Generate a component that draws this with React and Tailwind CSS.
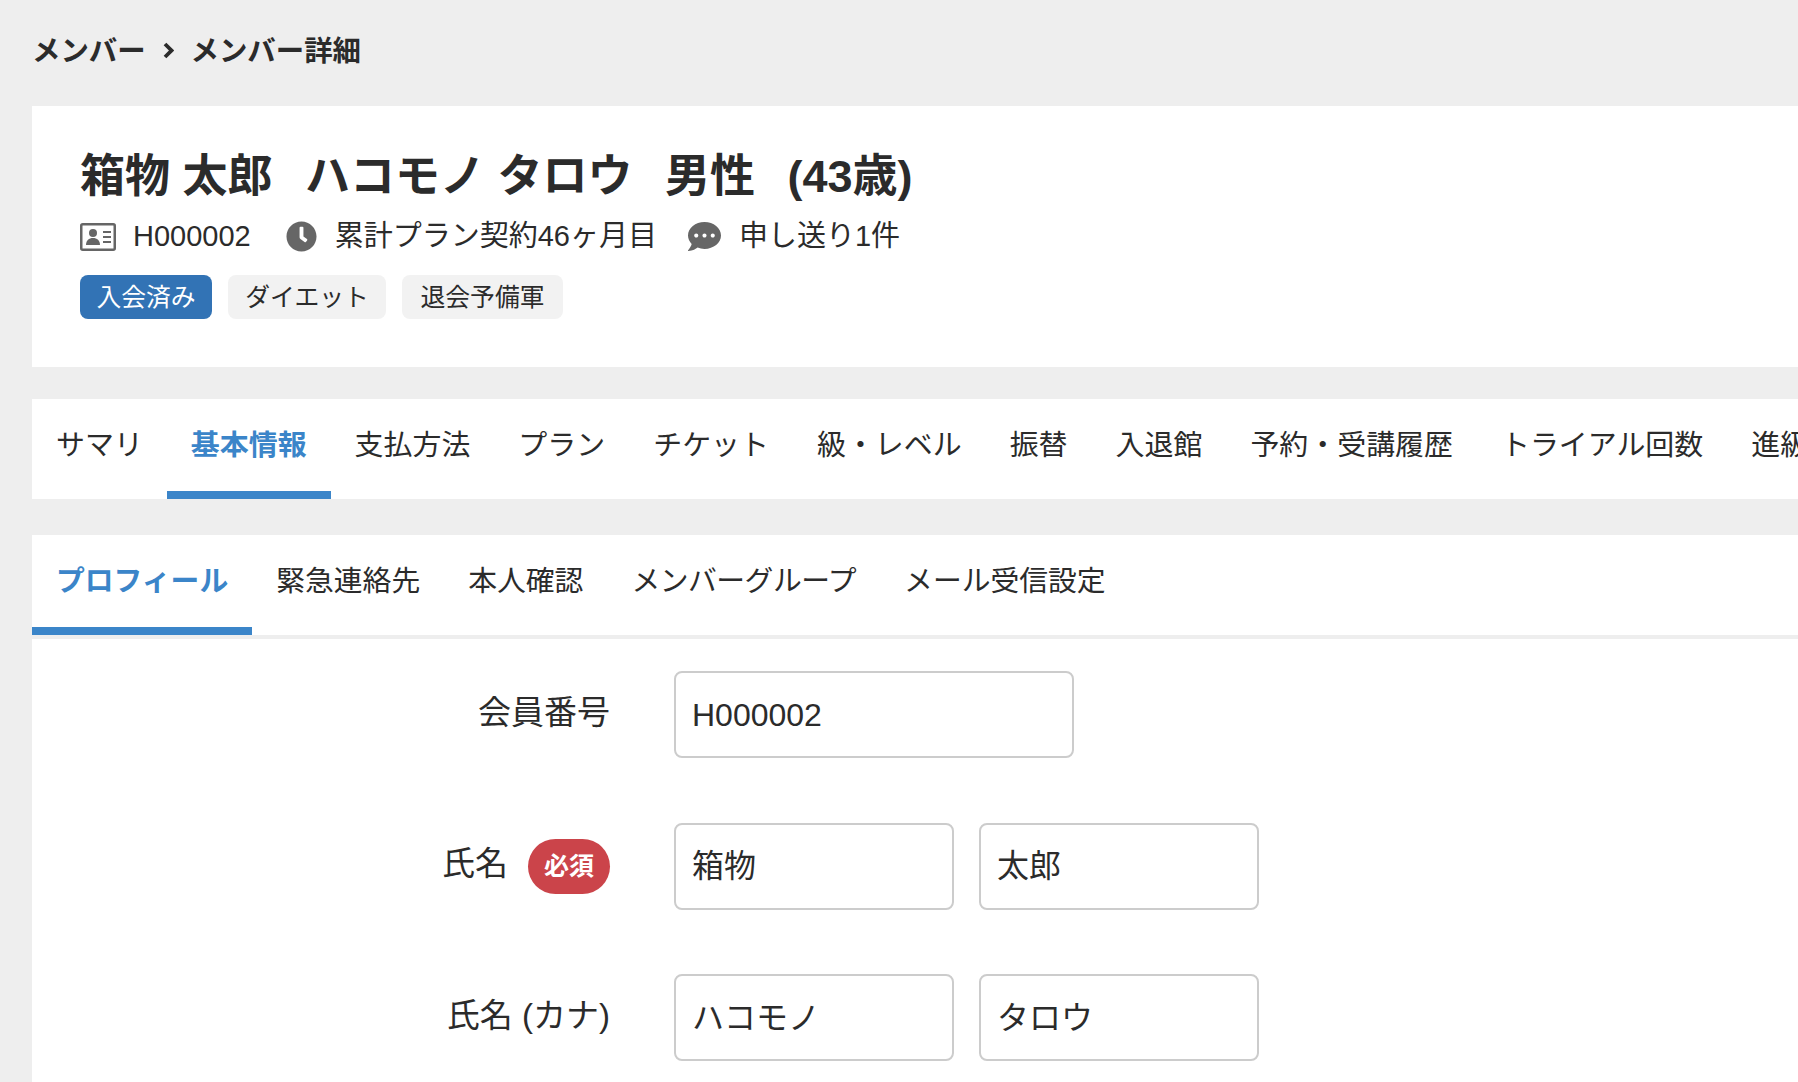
import { FaClock, FaCommentDots } from "react-icons/fa";

const mainTabs = ["サマリ", "基本情報", "支払方法", "プラン", "チケット", "級・レベル", "振替", "入退館", "予約・受講履歴", "トライアル回数", "進級履歴"];
const subTabs = ["プロフィール", "緊急連絡先", "本人確認", "メンバーグループ", "メール受信設定"];

function IdCardIcon() {
  return (
    <svg viewBox="0 0 36 28" className="w-[36px] h-[28px] mt-[2px] text-[#666]">
      <rect x="1.250" y="1.250" width="33.500" height="25.500" rx="1.500" fill="none" stroke="currentColor" strokeWidth="2.500" />
      <circle cx="13" cy="10" r="4" fill="currentColor" />
      <path d="M6 22c0-4.500 3-7 7-7s7 2.500 7 7z" fill="currentColor" />
      <path d="M23 9h8M23 14h8M23 19h8" stroke="currentColor" strokeWidth="1.800" />
    </svg>
  );
}

function Field({ label, required, values, wide }) {
  return (
    <div className="flex items-center">
      <div className="w-[578px] shrink-0 flex items-center justify-end gap-5 text-[33px] leading-[48px]">
        <span className="pb-[4px]">{label}</span>
        {required && (
          <span className="w-[82px] h-[55px] rounded-full bg-[#cb444a] text-white text-[25px] font-bold flex items-center justify-center">
            必須
          </span>
        )}
      </div>
      <div className="ml-[64px] flex gap-[25px]">
        {values.map((v) => (
          <div
            key={v}
            className={`${wide ? "w-[400px]" : "w-[280px]"} h-[87px] border-2 border-[#ccc] rounded-lg px-4 flex items-center text-[32px] bg-white`}
          >
            {v}
          </div>
        ))}
      </div>
    </div>
  );
}

export default function App() {
  return (
    <div
      className="w-[1798px] h-[1082px] overflow-hidden bg-[#eee] text-[#2b2b2b] pl-8"
      style={{ fontFamily: '"Liberation Sans", "Noto Sans CJK JP", sans-serif' }}
    >
      {/* breadcrumb */}
      <div className="h-[106px] pt-[28px] flex items-start gap-[17px] text-[28.4px] leading-[46px] font-bold">
        <span>メンバー</span>
        <svg viewBox="0 0 11 17" className="w-[11px] h-[17px] mt-[14px]">
          <polyline points="2,2 8.500,8.500 2,15" fill="none" stroke="currentColor" strokeWidth="3.800" />
        </svg>
        <span>メンバー詳細</span>
      </div>

      {/* member header */}
      <div className="w-[1900px] h-[261px] bg-white pl-12 pt-[41px]">
        <h1 className="flex gap-[32.5px] text-[45px] leading-[60px] font-bold whitespace-nowrap">
          <span>箱物 太郎</span>
          <span>ハコモノ タロウ</span>
          <span>男性</span>
          <span>(43歳)</span>
        </h1>
        <div className="mt-[7px] flex items-center text-[29px] leading-[44px] h-[44px]">
          <IdCardIcon />
          <span className="ml-[17px]">H000002</span>
          <FaClock className="ml-[35px] w-[31px] h-[31px] text-[#666]" />
          <span className="ml-[18px]">累計プラン契約46ヶ月目</span>
          <FaCommentDots className="ml-[31px] w-[33px] h-[33px] text-[#666]" />
          <span className="ml-[18px]">申し送り1件</span>
        </div>
        <div className="mt-[17px] flex gap-4 text-[24.8px]">
          <span className="w-[132px] h-[44px] pt-[2px] rounded-lg bg-[#3273b5] text-white flex items-center justify-center">入会済み</span>
          <span className="w-[158px] h-[44px] pt-[2px] rounded-lg bg-[#f2f2f2] flex items-center justify-center">ダイエット</span>
          <span className="w-[161px] h-[44px] pt-[2px] rounded-lg bg-[#f2f2f2] flex items-center justify-center">退会予備軍</span>
        </div>
      </div>

      {/* main tabs */}
      <div className="mt-8 w-[1900px] h-[100px] bg-white flex text-[28.95px]">
        {mainTabs.map((t) => (
          <div
            key={t}
            className={
              t === "基本情報"
                ? "px-[24px] h-full pt-[25px] border-b-8 border-[#3b85c9] text-[#3b85c9] font-bold whitespace-nowrap"
                : "px-[24px] h-full pt-[25px] whitespace-nowrap"
            }
          >
            {t}
          </div>
        ))}
      </div>

      {/* profile card */}
      <div className="mt-9 w-[1900px] h-[600px] bg-white">
        <div className="h-[104px] border-b-4 border-[#eee] flex text-[28.8px]">
          {subTabs.map((t) => (
            <div
              key={t}
              className={
                t === "プロフィール"
                  ? "px-[24px] h-[100px] pt-[25px] border-b-8 border-[#3b85c9] text-[#3b85c9] font-bold whitespace-nowrap"
                  : t === "メンバーグループ"
                    ? "px-[24px] h-[100px] pt-[25px] tracking-[-0.5px] whitespace-nowrap"
                    : "px-[24px] h-[100px] pt-[25px] whitespace-nowrap"
              }
            >
              {t}
            </div>
          ))}
        </div>
        <div className="pt-[32px] flex flex-col gap-[64.5px]">
          <Field label="会員番号" values={["H000002"]} wide />
          <Field label="氏名" required values={["箱物", "太郎"]} />
          <Field label="氏名 (カナ)" values={["ハコモノ", "タロウ"]} />
        </div>
      </div>
    </div>
  );
}
